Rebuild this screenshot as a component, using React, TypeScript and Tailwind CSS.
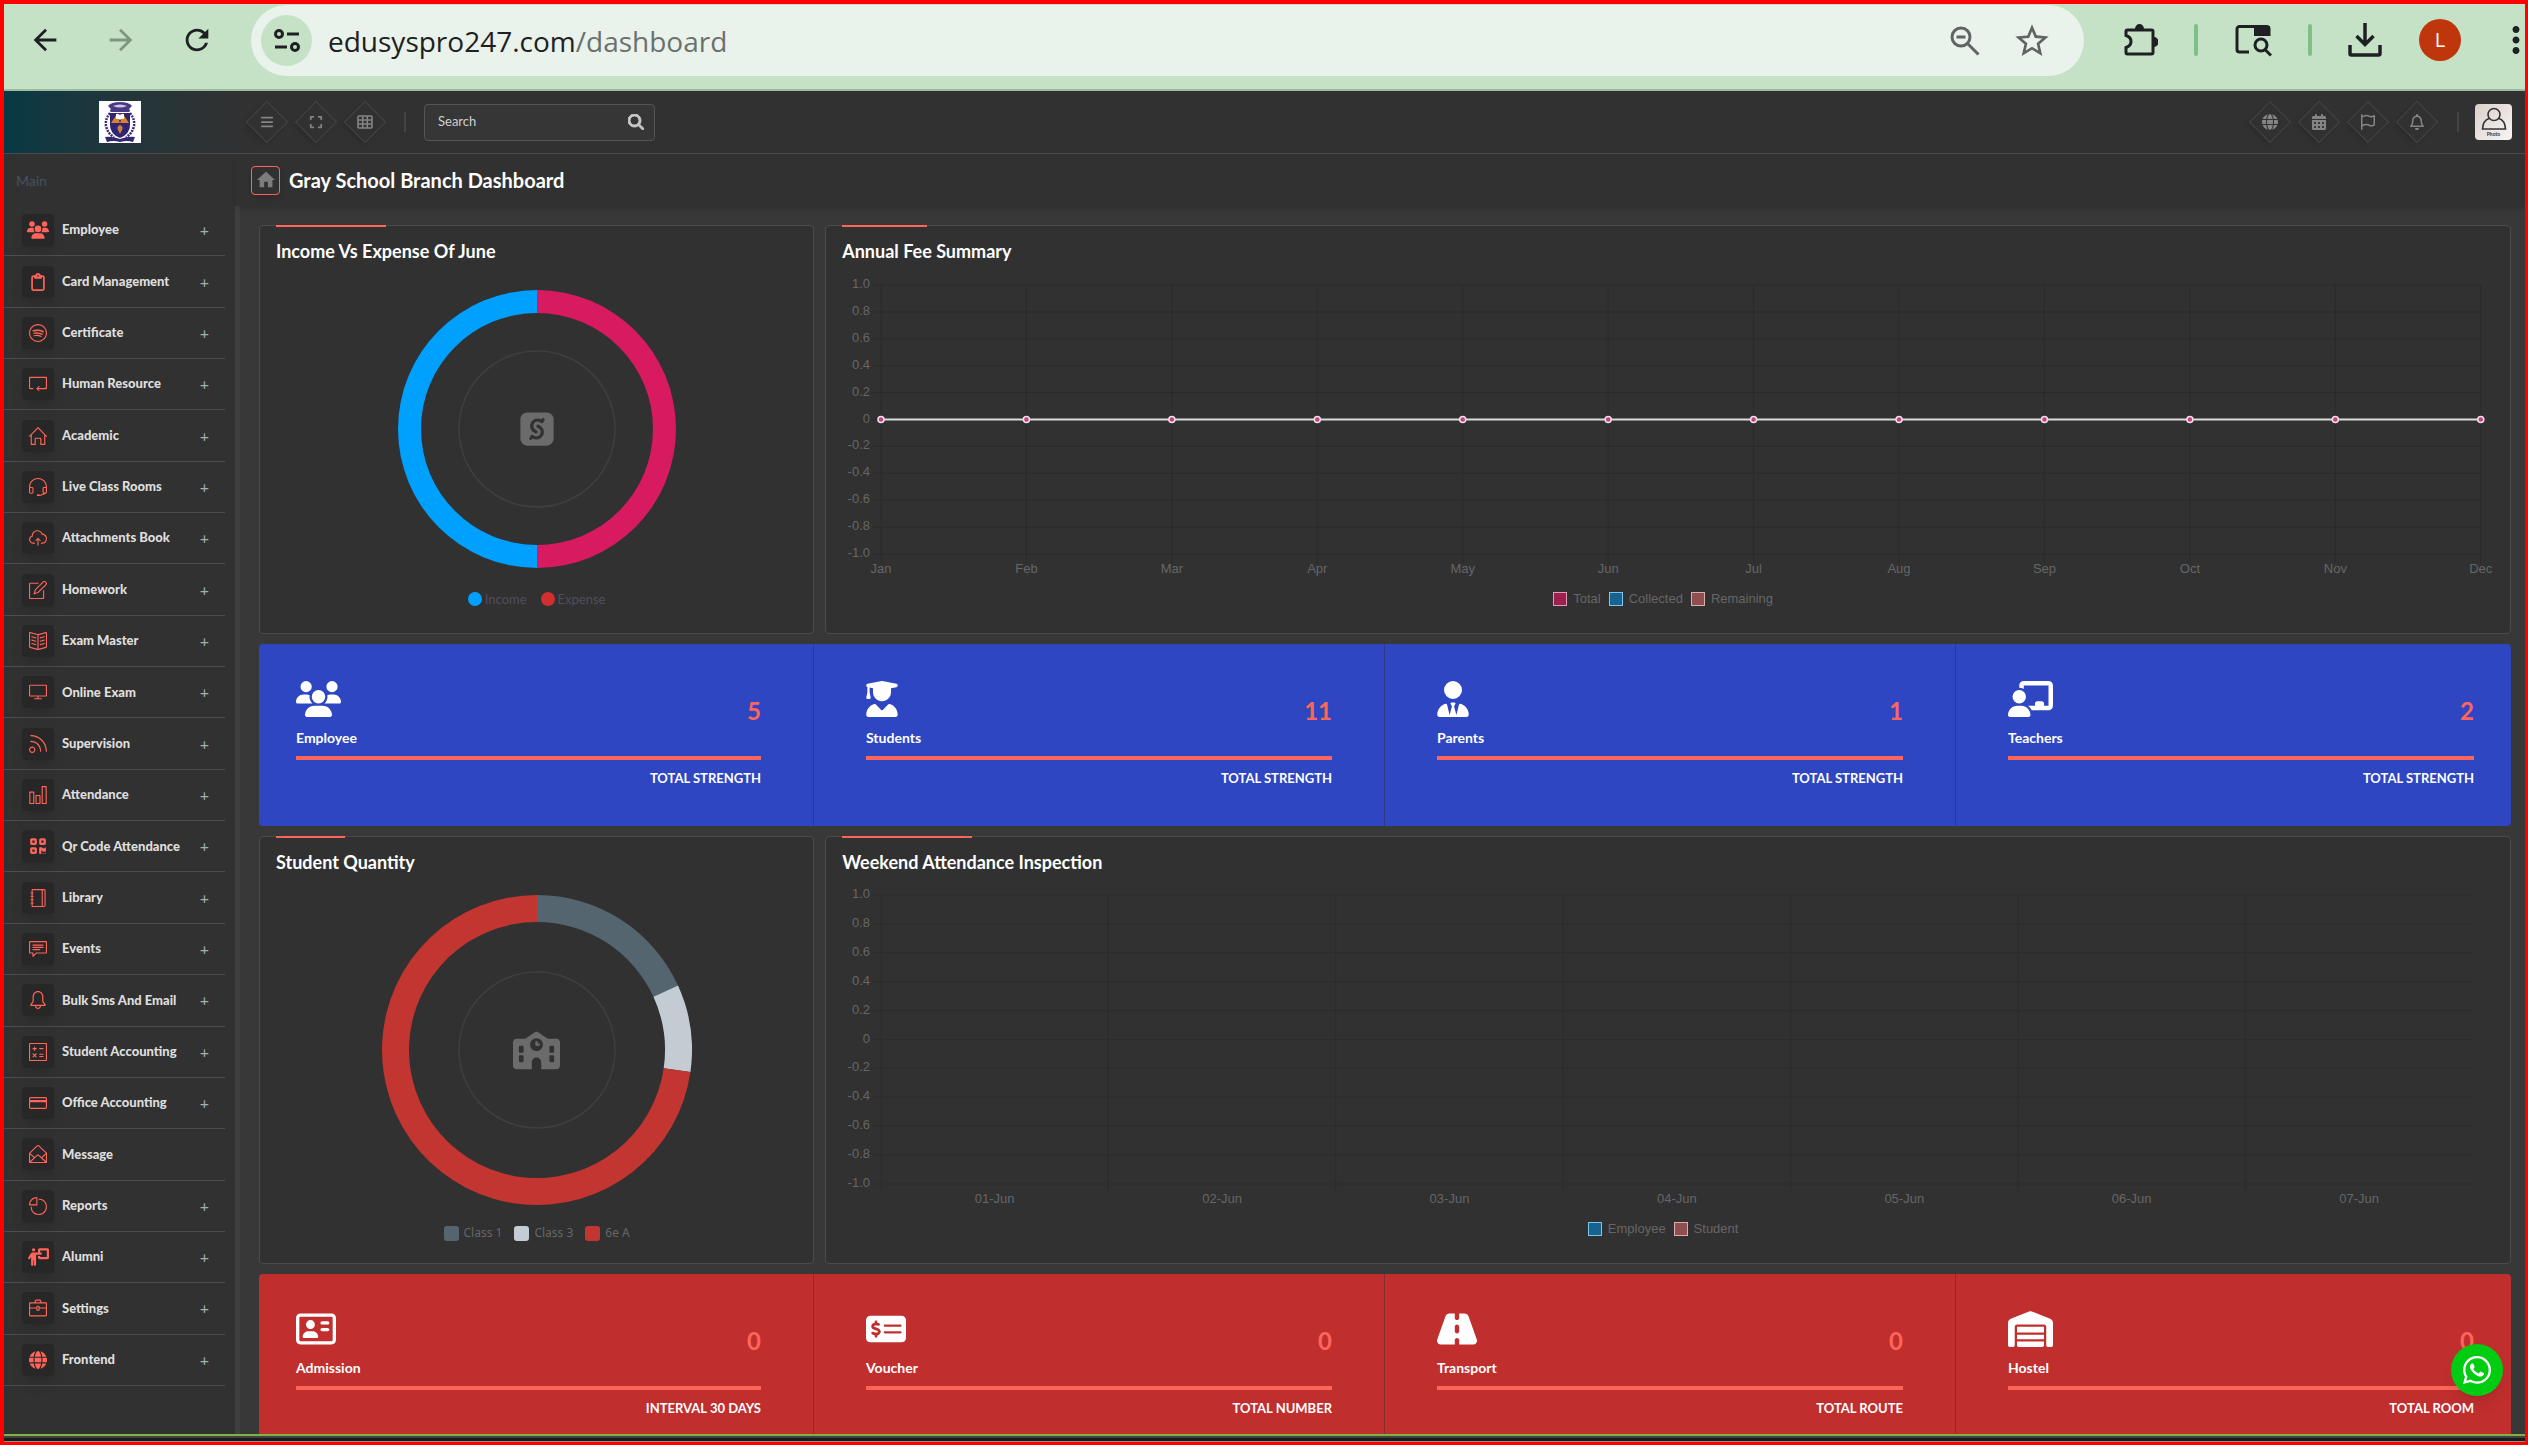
import { useState } from 'react'
import type { IconType } from 'react-icons'
import {
  FaBars,
  FaUsers,
  FaUserGraduate,
  FaUserTie,
  FaChalkboardUser,
  FaPersonChalkboard,
  FaRegAddressCard,
  FaMoneyCheckDollar,
  FaRoad,
  FaWarehouse,
  FaSchool,
  FaGlobe,
  FaQrcode,
  FaWhatsapp,
  FaSellcast,
  FaRegClipboard,
  FaRegBell,
  FaRegFlag,
  FaExpand,
  FaCalendarDays,
  FaMagnifyingGlass,
} from 'react-icons/fa6'
import {
  SlSocialSpotify,
  SlLoop,
  SlHome,
  SlEarphonesAlt,
  SlCloudUpload,
  SlNote,
  SlBookOpen,
  SlScreenDesktop,
  SlFeed,
  SlChart,
  SlNotebook,
  SlSpeech,
  SlBell,
  SlCalculator,
  SlCreditCard,
  SlEnvelopeOpen,
  SlPieChart,
  SlBriefcase,
} from 'react-icons/sl'
import {
  MdArrowBack,
  MdArrowForward,
  MdRefresh,
  MdStarBorder,
  MdHome,
  MdMoreVert,
} from 'react-icons/md'

interface MenuItem {
  label: string
  icon: IconType
  wide?: boolean
  leaf?: boolean
}

interface Stat {
  label: string
  value: number
  note: string
  icon: IconType
  width: string
}

interface Slice {
  label: string
  value: number
  color: string
}

interface Series {
  label: string
  swatch: string
}

const menu: MenuItem[] = [
  { label: 'Employee', icon: FaUsers, wide: true },
  { label: 'Card Management', icon: FaRegClipboard },
  { label: 'Certificate', icon: SlSocialSpotify },
  { label: 'Human Resource', icon: SlLoop },
  { label: 'Academic', icon: SlHome },
  { label: 'Live Class Rooms', icon: SlEarphonesAlt },
  { label: 'Attachments Book', icon: SlCloudUpload },
  { label: 'Homework', icon: SlNote },
  { label: 'Exam Master', icon: SlBookOpen },
  { label: 'Online Exam', icon: SlScreenDesktop },
  { label: 'Supervision', icon: SlFeed },
  { label: 'Attendance', icon: SlChart },
  { label: 'Qr Code Attendance', icon: FaQrcode },
  { label: 'Library', icon: SlNotebook },
  { label: 'Events', icon: SlSpeech },
  { label: 'Bulk Sms And Email', icon: SlBell },
  { label: 'Student Accounting', icon: SlCalculator },
  { label: 'Office Accounting', icon: SlCreditCard },
  { label: 'Message', icon: SlEnvelopeOpen, leaf: true },
  { label: 'Reports', icon: SlPieChart },
  { label: 'Alumni', icon: FaPersonChalkboard, wide: true },
  { label: 'Settings', icon: SlBriefcase },
  { label: 'Frontend', icon: FaGlobe },
]

const strength: Stat[] = [
  { label: 'Employee', value: 5, note: 'TOTAL STRENGTH', icon: FaUsers, width: 'w-[45px]' },
  { label: 'Students', value: 11, note: 'TOTAL STRENGTH', icon: FaUserGraduate, width: 'w-8' },
  { label: 'Parents', value: 1, note: 'TOTAL STRENGTH', icon: FaUserTie, width: 'w-8' },
  { label: 'Teachers', value: 2, note: 'TOTAL STRENGTH', icon: FaChalkboardUser, width: 'w-[45px]' },
]

const totals: Stat[] = [
  { label: 'Admission', value: 0, note: 'INTERVAL 30 DAYS', icon: FaRegAddressCard, width: 'w-10' },
  { label: 'Voucher', value: 0, note: 'TOTAL NUMBER', icon: FaMoneyCheckDollar, width: 'w-10' },
  { label: 'Transport', value: 0, note: 'TOTAL ROUTE', icon: FaRoad, width: 'w-10' },
  { label: 'Hostel', value: 0, note: 'TOTAL ROOM', icon: FaWarehouse, width: 'w-[45px]' },
]

const cashBook: Slice[] = [
  { label: 'Expense', value: 1, color: '#d81b60' },
  { label: 'Income', value: 1, color: '#00a0ff' },
]

const classes: Slice[] = [
  { label: 'Class 1', value: 2, color: '#546570' },
  { label: 'Class 3', value: 1, color: '#c4ccd3' },
  { label: '6e A', value: 8, color: '#c23531' },
]

const months = ['Jan', 'Feb', 'Mar', 'Apr', 'May', 'Jun', 'Jul', 'Aug', 'Sep', 'Oct', 'Nov', 'Dec']
const days = ['01-Jun', '02-Jun', '03-Jun', '04-Jun', '05-Jun', '06-Jun', '07-Jun']
const ticks = ['1.0', '0.8', '0.6', '0.4', '0.2', '0', '-0.2', '-0.4', '-0.6', '-0.8', '-1.0']

const feeSeries: Series[] = [
  { label: 'Total', swatch: 'bg-[#9d1f4f] border-[#dd9cb5]' },
  { label: 'Collected', swatch: 'bg-[#17638f] border-[#7fc4ee]' },
  { label: 'Remaining', swatch: 'bg-[#8f4f50] border-[#d9adad]' },
]

const attendanceSeries: Series[] = [
  { label: 'Employee', swatch: 'bg-[#17638f] border-[#7fc4ee]' },
  { label: 'Student', swatch: 'bg-[#8f4f50] border-[#d9adad]' },
]

function TuneIcon() {
  return (
    <svg viewBox="0 0 26 26" className="size-[26px]" fill="none" stroke="#1f2023" strokeWidth="3">
      <circle cx="5" cy="6" r="3.5" />
      <path d="M13 6h12M1 19h12" />
      <circle cx="21" cy="19" r="3.5" />
    </svg>
  )
}

function ZoomOutIcon() {
  return (
    <svg viewBox="0 0 30 30" className="size-[30px]" fill="none" stroke="#5f6563" strokeWidth="3">
      <circle cx="11" cy="11" r="9" />
      <path d="M6.500 11h9M17.500 17.500l11 11" />
    </svg>
  )
}

function PuzzleIcon() {
  return (
    <svg viewBox="0 0 34 34" className="size-[34px]" fill="none" stroke="#1f2023" strokeWidth="3">
      <path d="M3.500 7h24q1.500 0 1.500 1.500v21q0 1.500-1.500 1.500H3.500q-1.500 0-1.500-1.500v-5q5-1.500 5-6t-5-6v-4Q2 7 3.500 7z" />
      <path d="M11 6a4.500 5 0 0 1 9 0zM30 14a4.500 5 0 0 1 0 10z" fill="#1f2023" stroke="none" />
    </svg>
  )
}

function TabSearchIcon() {
  return (
    <svg viewBox="0 0 38 34" className="w-[38px] h-[34px]" fill="none" stroke="#1f2023" strokeWidth="3">
      <path d="M15 29H5.500a2.500 2.500 0 0 1-2.500-2.500V6a2.500 2.500 0 0 1 2.500-2.500h27A2.500 2.500 0 0 1 35 6v7" />
      <path d="M20 3h16v10H20z" fill="#1f2023" stroke="none" />
      <circle cx="27" cy="22" r="6" />
      <path d="M31 26.500l6 6" />
    </svg>
  )
}

function DownloadIcon() {
  return (
    <svg viewBox="0 0 34 34" className="size-[34px]" fill="none" stroke="#1f2023" strokeWidth="3.500">
      <path d="M17 0v21M8.500 13l8.500 8.500L25.500 13M2 22v8.500a1.500 1.500 0 0 0 1.500 1.500h27a1.500 1.500 0 0 0 1.500-1.500V22" />
    </svg>
  )
}

function GridIcon() {
  return (
    <svg viewBox="0 0 16 14" className="w-4 h-3.5" fill="none" stroke="currentColor" strokeWidth="1.600">
      <rect x="1" y="1" width="14" height="12" rx="1" />
      <path d="M5.700 1v12M10.300 1v12M1 5h14M1 9h14" />
    </svg>
  )
}

function Crest() {
  return (
    <svg viewBox="0 0 42 42" className="size-[42px] bg-white" role="img" aria-label="School crest">
      <path d="M9 5q3-4 12-4t12 4l-3 3q2 2 0 3H12q-2-1 0-3z" fill="#4a3a86" />
      <path d="M14 5q7-3 14 0-7 3-14 0z" fill="#cfc8e4" />
      <path d="M11 12Q6 18 7 25q2 8 8 11M31 12q5 6 4 13-2 8-8 11" fill="none" stroke="#3b2c7a" strokeWidth="2.500" strokeDasharray="2 1" />
      <path d="M11 12h20v12q0 9-10 13-10-4-10-13z" fill="#2f2474" />
      <path d="M12 22l6-9 3 9zM30 22l-6-9-3 9z" fill="#d9822b" />
      <path d="M17 13q2-1 4 1 2-2 4-1v5q-2-1-4 1-2-2-4-1z" fill="#fff" />
      <path d="M21 24q-4 2-2 5l2 4 2-4q2-3-2-5z" fill="#c9803c" />
      <path d="M6 36q7-1 15 2 8-3 15-2l-2 5q-6-2-13 0-7-2-13 0z" fill="#33276f" />
    </svg>
  )
}

function BrowserBar() {
  return (
    <div className="flex h-[87px] shrink-0 items-start overflow-hidden border-b-2 border-[#9dbb9e] bg-[#c5e2c6] pl-6 text-[#1f2023]">
      <div className="flex h-[72px] items-center gap-[42px]">
        <button aria-label="Back" className="size-[34px]"><MdArrowBack className="size-[34px]" /></button>
        <button aria-label="Forward" className="size-[34px] text-[#7f957f]"><MdArrowForward className="size-[34px]" /></button>
        <button aria-label="Reload" className="size-[34px]"><MdRefresh className="size-[34px]" /></button>
      </div>
      <div className="mt-px ml-[37px] flex h-[71px] flex-1 items-center rounded-full bg-[#e9f3eb] pr-8 pl-2.5">
        <button aria-label="Site information" className="flex size-[51px] items-center justify-center rounded-full bg-[#c5e2c6]">
          <TuneIcon />
        </button>
        <a href="/dashboard" className="ml-4 flex-1 font-['Open_Sans',sans-serif] text-[28px] text-[#1f2023]">
          edusyspro247.com<span className="text-[#6b706d]">/dashboard</span>
        </a>
        <button aria-label="Zoom out" className="mr-8"><ZoomOutIcon /></button>
        <button aria-label="Bookmark"><MdStarBorder className="size-10 text-[#5f6563]" /></button>
      </div>
      <div className="ml-10 flex h-[72px] items-center">
        <button aria-label="Extensions"><PuzzleIcon /></button>
        <span className="mx-[36px] h-8 w-1 rounded-full bg-[#7fc182]" />
        <button aria-label="Search tabs"><TabSearchIcon /></button>
        <span className="mx-[36px] h-8 w-1 rounded-full bg-[#7fc182]" />
        <button aria-label="Downloads"><DownloadIcon /></button>
        <button aria-label="Profile" className="ml-[37px] size-[42px] rounded-full bg-[#bf360c] font-['Open_Sans',sans-serif] text-xl text-white">L</button>
        <button aria-label="Menu" className="-mr-3 ml-[34px]"><MdMoreVert className="h-12 w-[42px]" /></button>
      </div>
    </div>
  )
}

function Diamond({ label, children }: { label: string; children: React.ReactNode }) {
  return (
    <button aria-label={label} className="flex size-[30px] rotate-45 items-center justify-center border border-[#444] shadow-md">
      <span className="-rotate-45 text-[#848484]">{children}</span>
    </button>
  )
}

function TopBar() {
  return (
    <header className="flex h-[63px] shrink-0 items-center border-b border-[#4a4a4a] bg-[#313131]">
      <div className="flex h-full w-[240px] items-center bg-gradient-to-r from-[#063944] to-[#313131] pl-[95px]">
        <Crest />
      </div>
      <div className="ml-2 flex items-center gap-[19px]">
        <Diamond label="Toggle sidebar"><FaBars className="size-3.5" /></Diamond>
        <Diamond label="Full screen"><FaExpand className="size-3.5" /></Diamond>
        <Diamond label="Shortcuts"><GridIcon /></Diamond>
      </div>
      <span className="ml-6 h-5 w-0.5 bg-[#444]" />
      <form className="ml-[18px] flex h-[37px] w-[231px] items-center rounded border border-[#545454] bg-[#363636] pr-2.5 pl-[13px]">
        <input aria-label="Search" placeholder="Search" className="min-w-0 flex-1 bg-transparent text-[13px] text-white outline-none placeholder:text-[#cfcfcf]" />
        <button aria-label="Submit search">
          <FaMagnifyingGlass className="size-4 text-[#c8c8c8]" stroke="currentColor" strokeWidth="32" />
        </button>
      </form>
      <div className="ml-auto flex items-center gap-[19px]">
        <Diamond label="Language"><FaGlobe className="size-4" /></Diamond>
        <Diamond label="Calendar"><FaCalendarDays className="size-4" /></Diamond>
        <Diamond label="Messages"><FaRegFlag className="size-4" /></Diamond>
        <Diamond label="Notifications"><FaRegBell className="size-4" /></Diamond>
      </div>
      <span className="ml-[25px] h-5 w-0.5 bg-[#444]" />
      <button aria-label="Account" className="mr-[13px] ml-4 flex h-9 w-[37px] flex-col items-center rounded bg-gradient-to-br from-[#dccfcb] to-[#f7f5f5] text-[#333]">
        <svg viewBox="0 0 26 24" className="mt-0.5 h-[25px] w-[26px]" fill="none" stroke="currentColor" strokeWidth="1.600">
          <circle cx="13" cy="8" r="6" />
          <path d="M8 12q-6 2-6.500 10.500h23Q24 14 18 12" />
        </svg>
        <span className="text-[5px] leading-[6px] font-bold">Photo</span>
      </button>
    </header>
  )
}

function Sidebar() {
  const [active, setActive] = useState('')

  return (
    <aside className="flex w-[231px] shrink-0 flex-col bg-[#313131]">
      <div className="flex h-[51px] shrink-0 items-end pb-3.5 pl-3 text-sm text-[#465164]">Main</div>
      <nav className="flex flex-1 flex-col pr-2.5 pb-12">
        {menu.map(({ label, icon: Icon, wide, leaf }) => (
          <button
            key={label}
            onClick={() => setActive(active === label ? '' : label)}
            className="flex flex-1 items-center border-b border-[#4c4d50] pr-4 pl-[18px] text-left"
          >
            <span className="flex size-8 items-center justify-center rounded bg-[#272727] text-[#ff655b] shadow-lg">
              <Icon className={wide ? 'h-[18px] w-[22px]' : 'size-[18px]'} />
            </span>
            <span className="ml-2 flex-1 text-[13px] font-black text-[#dedede]">{label}</span>
            {!leaf && <span className="text-base leading-4 text-[#a3adb5]">+</span>}
          </button>
        ))}
      </nav>
    </aside>
  )
}

function Card({ title, children }: { title: string; children: React.ReactNode }) {
  return (
    <section className="flex flex-col rounded border border-[#4b4b4e] bg-[#313131]">
      <div className="-mt-px flex px-4">
        <h2 className="relative pt-[13px] pb-px text-lg leading-[26px] font-bold text-white before:absolute before:top-0 before:left-0 before:h-0.5 before:w-1/2 before:bg-[#ff655b]">
          {title}
        </h2>
      </div>
      {children}
    </section>
  )
}

function Donut({ slices, outer, inner, icon: Icon, iconClass }: {
  slices: Slice[]
  outer: number
  inner: number
  icon: IconType
  iconClass: string
}) {
  const size = outer * 2
  const total = slices.reduce((sum, s) => sum + s.value, 0)
  const point = (share: number, r: number) => {
    const a = share * Math.PI * 2
    return `${outer + r * Math.sin(a)} ${outer - r * Math.cos(a)}`
  }
  let start = 0

  return (
    <div className="grid place-items-center">
      <svg width={size} height={size} className="col-start-1 row-start-1">
        {slices.map((s) => {
          const from = start
          const to = start + s.value / total
          start = to
          const large = to - from > 0.5 ? 1 : 0
          return (
            <path
              key={s.label}
              fill={s.color}
              d={`M${point(from, outer)}A${outer} ${outer} 0 ${large} 1 ${point(to, outer)}L${point(to, inner)}A${inner} ${inner} 0 ${large} 0 ${point(from, inner)}Z`}
            />
          )
        })}
        <circle cx={outer} cy={outer} r="78" fill="none" stroke="#3f3f3f" strokeWidth="1.500" />
      </svg>
      <Icon className={`col-start-1 row-start-1 text-[#6b6b6b] ${iconClass}`} />
    </div>
  )
}

function Legend({ series }: { series: Series[] }) {
  return (
    <div className="flex items-center justify-center gap-2 font-['Liberation_Sans',sans-serif] text-[13px] leading-4 text-[#666]">
      {series.map((s) => (
        <span key={s.label} className="flex items-center gap-1.5">
          <span className={`size-3.5 border ${s.swatch}`} />
          {s.label}
        </span>
      ))}
    </div>
  )
}

function Scale({ height }: { height: number }) {
  return (
    <svg className="w-9 shrink-0 overflow-visible font-['Liberation_Sans',sans-serif] text-[13px]" height={height}>
      {ticks.map((t, i) => (
        <text key={t} x="28" y={(height * i) / 10 + 3} textAnchor="end" fill="#666">{t}</text>
      ))}
    </svg>
  )
}

function FeeChart() {
  const height = 269
  const x = (i: number) => `${(i * 100) / (months.length - 1)}%`

  return (
    <div className="flex pt-5 pr-[29px] pl-4">
      <Scale height={height} />
      <div className="flex-1 pl-[3px]">
        <svg width="100%" height={height + 24} className="overflow-visible font-['Liberation_Sans',sans-serif] text-[13px]">
          {ticks.map((t, i) => (
            <line key={t} x1="-8" x2="100%" y1={(height * i) / 10} y2={(height * i) / 10} stroke="#2b2b2b" />
          ))}
          {months.map((m, i) => (
            <line key={m} x1={x(i)} x2={x(i)} y1="0" y2={height + 9} stroke="#2b2b2b" />
          ))}
          <line x1="0" x2="100%" y1={height / 2} y2={height / 2} stroke="#dcdcdc" strokeWidth="2" />
          {months.map((m, i) => (
            <g key={m}>
              <circle cx={x(i)} cy={height / 2} r="3" fill="#c2437c" stroke="#f3dfe6" strokeWidth="1.500" />
              <text x={x(i)} y={height + 19} textAnchor="middle" fill="#666">{m}</text>
            </g>
          ))}
        </svg>
      </div>
    </div>
  )
}

function AttendanceChart() {
  const height = 289
  const step = 100 / days.length

  return (
    <div className="flex pt-[19px] pr-[37px] pl-4">
      <Scale height={height} />
      <div className="flex-1 pl-[3px]">
        <svg width="100%" height={height + 24} className="overflow-visible font-['Liberation_Sans',sans-serif] text-[13px]">
          {ticks.map((t, i) => (
            <line key={t} x1="-8" x2="100%" y1={(height * i) / 10} y2={(height * i) / 10} stroke="#2c2c2c" />
          ))}
          {days.map((d, i) => (
            <g key={d}>
              <line x1={`${i * step}%`} x2={`${i * step}%`} y1="0" y2={height + 10} stroke="#2c2c2c" />
              <text x={`${(i + 0.5) * step}%`} y={height + 19} textAnchor="middle" fill="#666">{d}</text>
            </g>
          ))}
        </svg>
      </div>
    </div>
  )
}

function StatRow({ stats, tone, line }: { stats: Stat[]; tone: string; line: string }) {
  return (
    <div className={`grid shrink-0 grid-cols-[555fr_571fr_571fr_555fr] rounded ${tone}`}>
      {stats.map(({ label, value, note, icon: Icon, width }) => (
        <div
          key={label}
          className={`flex h-[182px] flex-col border-r px-[52px] pt-[35px] first:pl-[37px] last:border-r-0 last:pr-[37px] ${line}`}
        >
          <div className="flex h-[39px] items-center">
            <Icon className={`h-9 text-white ${width}`} />
          </div>
          <div className="flex h-[38px] items-start justify-between">
            <span className="pt-2.5 text-sm leading-5 font-bold text-white">{label}</span>
            <span className="-mt-[21px] text-2xl leading-7 font-bold text-[#ff655b]">{value}</span>
          </div>
          <div className="h-1 shrink-0 bg-[#ff655b]" />
          <div className="pt-2 text-right text-[13px] leading-5 font-bold text-white">{note}</div>
        </div>
      ))}
    </div>
  )
}

export default function App() {
  return (
    <div className="flex h-screen flex-col overflow-hidden border-4 border-r-[3px] border-b-[3px] border-[#ff0000] bg-[#383838] font-['Lato',sans-serif]">
      <BrowserBar />
      <TopBar />
      <div className="flex min-h-0 flex-1">
        <Sidebar />
        <div className="flex min-w-0 flex-1 flex-col">
          <div className="relative z-10 flex h-[52px] shrink-0 items-center bg-[#313131] pl-4 shadow-md">
            <a href="/dashboard" aria-label="Home" className="flex size-[29px] items-center justify-center rounded-sm border border-[#ff655b] text-[#7d7d7d] shadow-md">
              <MdHome className="size-[22px]" />
            </a>
            <h1 className="ml-[9px] text-xl font-bold text-white">Gray School Branch Dashboard</h1>
          </div>
          <main className="flex min-h-0 flex-1 flex-col gap-2.5 overflow-hidden border-l-[5px] border-[#3f3f3f] pt-[19px] pr-[14px] pl-[19px]">
            <div className="grid shrink-0 grid-cols-[555fr_1685fr] gap-[11px]">
              <Card title="Income Vs Expense Of June">
                <div className="pt-[25px]">
                  <Donut slices={cashBook} outer={139} inner={116} icon={FaSellcast} iconClass="size-[38px]" />
                </div>
                <div className="flex justify-center gap-3.5 pt-[23px] pb-[26px] text-[13px] leading-4 text-[#4f4f5e]">
                  <span className="flex items-center gap-[3px]"><i className="size-3.5 rounded-full bg-[#00a0ff]" />Income</span>
                  <span className="flex items-center gap-[3px]"><i className="size-3.5 rounded-full bg-[#d32f2f]" />Expense</span>
                </div>
              </Card>
              <Card title="Annual Fee Summary">
                <FeeChart />
                <div className="pt-[13px] pr-[26px] pl-4"><Legend series={feeSeries} /></div>
              </Card>
            </div>
            <StatRow stats={strength} tone="bg-[#2e46c2]" line="border-[#2f3a86]" />
            <div className="grid shrink-0 grid-cols-[555fr_1685fr] gap-[11px]">
              <Card title="Student Quantity">
                <div className="pt-[19px]">
                  <Donut slices={classes} outer={155} inner={128} icon={FaSchool} iconClass="size-[47px]" />
                </div>
                <div className="flex justify-center gap-3 pt-[20px] pb-[22px] font-['Noto_Sans',sans-serif] text-xs leading-4 text-[#666]">
                  {classes.map((c) => (
                    <span key={c.label} className="flex items-center gap-[5px]">
                      <i className="size-[15px] rounded-[3px]" style={{ backgroundColor: c.color }} />
                      {c.label}
                    </span>
                  ))}
                </div>
              </Card>
              <Card title="Weekend Attendance Inspection">
                <AttendanceChart />
                <div className="pt-[13px] pr-[26px] pl-4"><Legend series={attendanceSeries} /></div>
              </Card>
            </div>
            <StatRow stats={totals} tone="bg-[#c12e2e]" line="border-[#862d2d]" />
          </main>
        </div>
      </div>
      <footer className="h-2 shrink-0 border-t-2 border-b border-t-[#7cb342] border-b-[#9b8a8a] bg-[#1b1b1b]">
        <div className="h-0.5 bg-[#414141]" />
      </footer>
      <a
        href="#chat"
        aria-label="WhatsApp"
        className="fixed right-[25px] bottom-[49px] z-20 flex size-[52px] items-center justify-center rounded-full bg-[#00cc11] text-white shadow-lg"
      >
        <FaWhatsapp className="size-8" />
      </a>
    </div>
  )
}
